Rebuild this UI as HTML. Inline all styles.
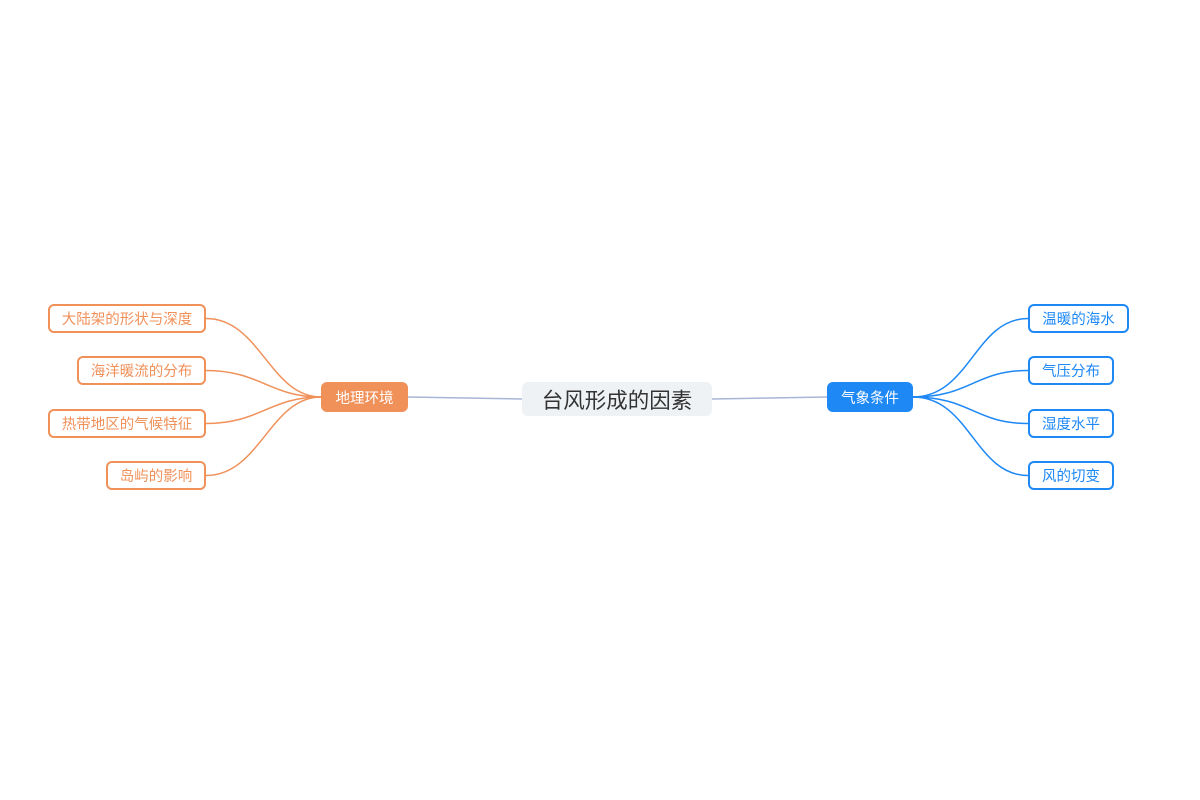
<!DOCTYPE html>
<html><head><meta charset="utf-8"><style>
body{margin:0;width:1200px;height:800px;background:#fff;position:relative;overflow:hidden;font-family:"Liberation Sans","Noto Sans CJK SC",sans-serif}
.n{position:absolute;box-sizing:border-box;display:flex;align-items:center;justify-content:center;font-size:14.5px;border-radius:6px;white-space:nowrap}
.o{border:2px solid #f0915a;color:#f0915a;background:#fff}
.b{border:2px solid #1e88f5;color:#1e88f5;background:#fff}
</style></head><body>
<svg width="1200" height="800" style="position:absolute;left:0;top:0">
<g fill="none" stroke="#f0915a" stroke-width="1.5">
<path d="M206 318.5 C260 318.5,270 397,321 397"/>
<path d="M206 370.5 C260 370.5,270 397,321 397"/>
<path d="M206 423.5 C260 423.5,270 397,321 397"/>
<path d="M206 475.5 C260 475.5,270 397,321 397"/>
</g>
<g fill="none" stroke="#1e88f5" stroke-width="1.5">
<path d="M913 397 C970 397,975 318.5,1028 318.5"/>
<path d="M913 397 C970 397,975 370.5,1028 370.5"/>
<path d="M913 397 C970 397,975 423.5,1028 423.5"/>
<path d="M913 397 C970 397,975 475.5,1028 475.5"/>
</g>
<path d="M408 397 L522 399 M712 399 L827 397" stroke="#a8b6d6" stroke-width="1.5" fill="none"/>
</svg>
<div class="n o" style="left:48px;top:304px;width:158px;height:29px">大陆架的形状与深度</div>
<div class="n o" style="left:77px;top:356px;width:129px;height:29px">海洋暖流的分布</div>
<div class="n o" style="left:48px;top:409px;width:158px;height:29px">热带地区的气候特征</div>
<div class="n o" style="left:106px;top:461px;width:100px;height:29px">岛屿的影响</div>
<div class="n" style="left:321px;top:382px;width:87px;height:30px;background:#f0915a;color:#fff">地理环境</div>
<div class="n" style="left:522px;top:382px;width:190px;height:34px;background:#eff2f4;color:#333;font-size:21.5px">台风形成的因素</div>
<div class="n" style="left:827px;top:382px;width:86px;height:30px;background:#1e88f5;color:#fff">气象条件</div>
<div class="n b" style="left:1028px;top:304px;width:101px;height:29px">温暖的海水</div>
<div class="n b" style="left:1028px;top:356px;width:86px;height:29px">气压分布</div>
<div class="n b" style="left:1028px;top:409px;width:86px;height:29px">湿度水平</div>
<div class="n b" style="left:1028px;top:461px;width:86px;height:29px">风的切变</div>
</body></html>
